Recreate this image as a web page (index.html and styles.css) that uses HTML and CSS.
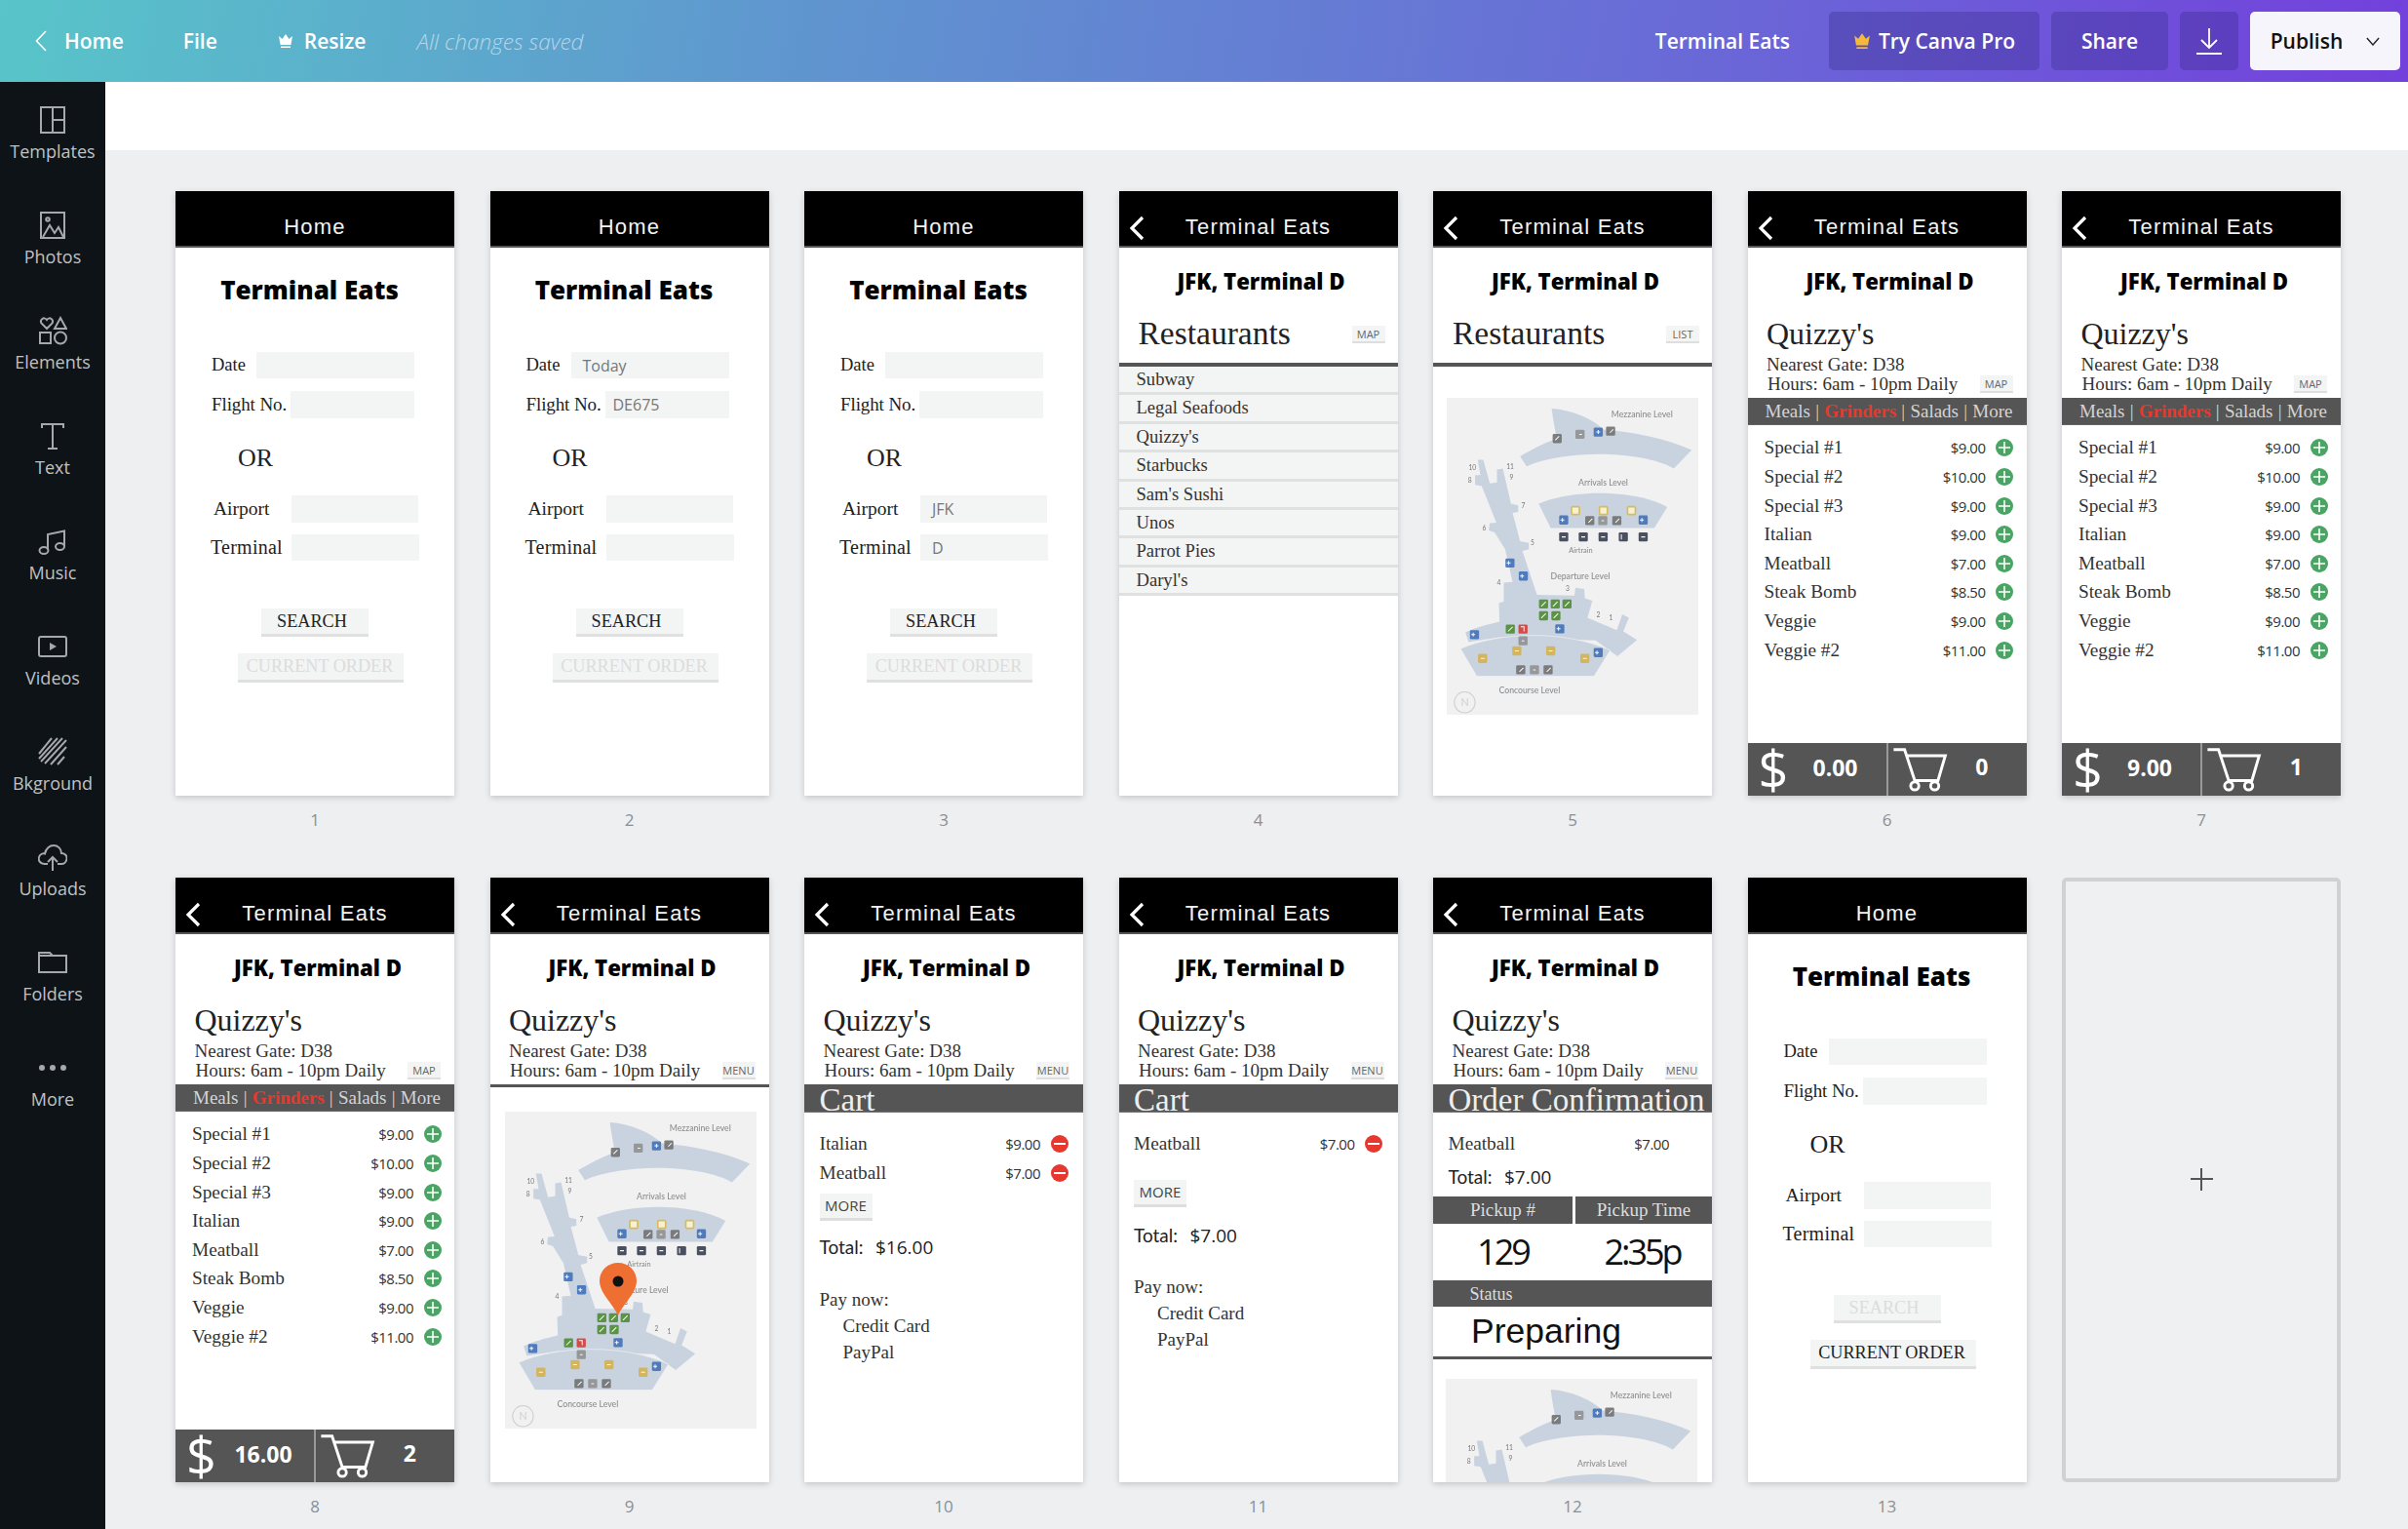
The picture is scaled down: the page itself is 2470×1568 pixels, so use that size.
FILE: index.html
```html
<!DOCTYPE html>
<html lang="en">
<head>
<meta charset="utf-8">
<title>Terminal Eats</title>
<link rel="stylesheet" href="styles.css">
</head>
<body>
<svg class="defs" width="0" height="0" aria-hidden="true">
  <symbol id="back" viewBox="0 0 16 26"><polyline points="14,2 3,13 14,24" fill="none" stroke="#fff" stroke-width="3.2"/></symbol>
  <symbol id="plus" viewBox="0 0 18 18"><circle cx="9" cy="9" r="9" fill="#4aa564"/><path d="M9 3v12M3 9h12" stroke="#fff" stroke-width="1.6"/></symbol>
  <symbol id="minus" viewBox="0 0 18 18"><circle cx="9" cy="9" r="9" fill="#e8372f"/><path d="M3 9h12" stroke="#fff" stroke-width="2"/></symbol>
  <symbol id="cart" viewBox="380 1365 140 115"><path d="M385 1374H412L437 1450H494L512 1389H418" fill="none" stroke="#fff" stroke-width="7"/><circle cx="437" cy="1463" r="10" fill="none" stroke="#fff" stroke-width="7"/><circle cx="486" cy="1463" r="10" fill="none" stroke="#fff" stroke-width="7"/></symbol>
  <symbol id="map" viewBox="43 25 772 973">
    <rect x="43" y="25" width="772" height="973" fill="#f1f1f2"/>
    <g fill="#c9d3df">
      <path d="M365 58C430 62 490 90 525 122C620 130 720 150 795 185L740 242C650 190 420 180 288 235L268 205C300 185 340 165 380 150C375 120 368 85 365 58Z"/>
      <path d="M325 350C430 305 620 305 720 360L680 425H362Z"/>
      <path d="M138 215L155 215L175 288L197 285L197 245L215 242L225 285L240 350L262 355L262 375L245 378L268 465L295 470L295 490L275 495L320 630L435 632L438 608L465 612L467 640L490 648L475 700L565 738L582 690L602 700L585 742L627 768L567 818L500 770L205 760L110 775L100 745C130 730 170 720 205 712L203 655L218 650L218 592L245 590L222 490L190 438L172 432L175 410L195 408L150 295L130 292L130 262L146 262Z"/>
      <path d="M85 795C200 745 400 735 545 800L495 880H135Z" stroke="#f1f1f2" stroke-width="2"/>
    </g>
    <g class="mk">
    <g fill="#6f6f6f">
      <rect x="368" y="136" width="28" height="28" rx="4"/><rect x="532" y="113" width="28" height="28" rx="4"/>
      <rect x="468" y="388" width="28" height="28" rx="4"/><rect x="551" y="388" width="28" height="28" rx="4"/>
      <rect x="256" y="846" width="28" height="28" rx="4"/><rect x="340" y="846" width="28" height="28" rx="4"/>
    </g>
    <g fill="#8f8f8f">
      <rect x="438" y="123" width="28" height="28" rx="4"/><rect x="508" y="388" width="28" height="28" rx="4"/><rect x="263" y="757" width="28" height="28" rx="4"/><rect x="298" y="846" width="28" height="28" rx="4"/>
    </g>
    <g fill="#3f70b8">
      <rect x="494" y="116" width="28" height="28" rx="4"/><rect x="388" y="386" width="28" height="28" rx="4"/><rect x="632" y="386" width="28" height="28" rx="4"/><rect x="223" y="518" width="28" height="28" rx="4"/><rect x="264" y="558" width="28" height="28" rx="4"/><rect x="376" y="720" width="28" height="28" rx="4"/><rect x="114" y="738" width="28" height="28" rx="4"/><rect x="494" y="793" width="28" height="28" rx="4"/>
    </g>
    <g fill="#fdf5d4" stroke="#d9b84a" stroke-width="5">
      <rect x="426" y="359" width="24" height="24" rx="3"/><rect x="512" y="359" width="24" height="24" rx="3"/><rect x="598" y="359" width="24" height="24" rx="3"/>
    </g>
    <g fill="#d4b24a">
      <rect x="139" y="811" width="28" height="28" rx="4"/><rect x="244" y="788" width="28" height="28" rx="4"/><rect x="348" y="788" width="28" height="28" rx="4"/><rect x="453" y="811" width="28" height="28" rx="4"/>
    </g>
    <g fill="#333a4d">
      <rect x="388" y="438" width="28" height="28" rx="4"/><rect x="448" y="438" width="28" height="28" rx="4"/><rect x="509" y="438" width="28" height="28" rx="4"/><rect x="571" y="438" width="28" height="28" rx="4"/><rect x="632" y="438" width="28" height="28" rx="4"/>
    </g>
    <g fill="#4c8c2c">
      <rect x="326" y="644" width="28" height="28" rx="4"/><rect x="362" y="644" width="28" height="28" rx="4"/><rect x="398" y="644" width="28" height="28" rx="4"/><rect x="326" y="680" width="28" height="28" rx="4"/><rect x="364" y="680" width="28" height="28" rx="4"/><rect x="224" y="721" width="28" height="28" rx="4"/>
    </g>
    <rect x="263" y="721" width="28" height="28" rx="4" fill="#d23c33"/>
    <path d="M376 155l12-12M450 137h8M508 124v12M502 130h12M544 132l10-10M478 408l12-12M561 408l12-12M518 402h8M273 771h8M266 866l12-12M308 860h8M350 866l12-12M398 394v12M392 400h12M642 394v12M636 400h12M233 526v12M227 532h12M274 566v12M268 572h12M386 728v12M380 734h12M124 746v12M118 752h12M504 801v12M498 807h12M333 665l14-14M369 665l14-14M405 665l14-14M333 701l14-14M371 701l14-14M231 742l14-14M270 728h10v14M147 825h12M252 802h12M356 802h12M461 825h12M396 452h12M456 452h12M517 452h12M579 444v16M640 452h12" fill="none" stroke="#fff" stroke-width="3"/>
    </g>
    <g class="map-lvl">
      <text x="548" y="84">Mezzanine Level</text>
      <text x="447" y="294">Arrivals Level</text>
      <text x="418" y="500" class="map-sm">Airtrain</text>
      <text x="362" y="582">Departure Level</text>
      <text x="203" y="932">Concourse Level</text>
    </g>
    <g class="map-num">
      <text x="110" y="248">10</text><text x="108" y="286">8</text><text x="226" y="245">11</text><text x="236" y="278">9</text><text x="272" y="363">7</text><text x="152" y="431">6</text><text x="300" y="476">5</text><text x="197" y="599">4</text><text x="408" y="619">3</text><text x="502" y="698">2</text><text x="541" y="708">1</text>
    </g>
    <circle cx="98" cy="960" r="32" fill="none" stroke="#cfcfcf" stroke-width="3"/>
    <text x="86" y="971" class="map-n">N</text>
  </symbol>
</svg>

<header class="topbar">
  <div class="top-left">
    <svg class="top-back" viewBox="0 0 12 22"><polyline points="11,1 1.5,11 11,21" fill="none" stroke="#fff" stroke-width="1.6"/></svg>
    <span class="top-home">Home</span>
    <span class="top-file">File</span>
    <svg class="crown" viewBox="0 0 16 16"><path d="M1 3l3.5 3L8 1l3.5 5L15 3l-1.6 9H2.600zM3 13.500h10V15H3z" fill="#fff"/></svg>
    <span class="top-resize">Resize</span>
    <span class="top-saved">All changes saved</span>
  </div>
  <div class="top-right">
    <span class="top-name">Terminal Eats</span>
    <button class="tbtn tbtn-pro"><svg class="crown crown-pro" viewBox="0 0 16 16"><path d="M1 3l3.500 3L8 1l3.500 5L15 3l-1.600 9H2.600zM3 13.500h10V15H3z" fill="#f5b93a"/></svg>Try Canva Pro</button>
    <button class="tbtn tbtn-share">Share</button>
    <button class="tbtn tbtn-dl"><svg class="dl" viewBox="0 0 28 28"><path d="M14 1v19M6 13l8 8 8-8M1 27h26" fill="none" stroke="#fff" stroke-width="1.800"/></svg></button>
    <button class="tbtn tbtn-pub"><span>Publish</span><svg class="pub-chev" viewBox="0 0 16 10"><polyline points="1,1 8,9 15,1" fill="none" stroke="#222" stroke-width="1.600"/></svg></button>
  </div>
</header>

<div class="main">
  <nav class="sidebar">
    <div class="tool"><svg class="ico" viewBox="0 0 30 30"><path d="M3 2h24v26H3zM15 2v26M15 15h12" fill="none"/></svg><span>Templates</span></div>
    <div class="tool"><svg class="ico" viewBox="0 0 30 30"><path d="M3 2h24v26H3zM5 27l7-12 5 8 4-6 5 10" fill="none"/><circle cx="10" cy="9" r="1.800"/></svg><span>Photos</span></div>
    <div class="tool"><svg class="ico" viewBox="0 0 30 30"><path d="M9 13L3.500 7.500C1.500 4 6 0 9 4c3-4 7.500 0 5.500 3.500zM23 2l6 11H17zM2 17h11v11H2z" fill="none"/><circle cx="23" cy="22.500" r="6" fill="none"/></svg><span>Elements</span></div>
    <div class="tool"><svg class="ico" viewBox="0 0 30 30"><path d="M4 7V3h22v4M15 3v25M10 28h10" fill="none"/></svg><span>Text</span></div>
    <div class="tool"><svg class="ico" viewBox="0 0 30 30"><path d="M10 24V8l17-3.500V20" fill="none"/><ellipse cx="6" cy="24.500" rx="4.500" ry="3.500" fill="none"/><ellipse cx="22.500" cy="20.500" rx="4.500" ry="3.500" fill="none"/></svg><span>Music</span></div>
    <div class="tool"><svg class="ico" viewBox="0 0 30 30"><rect x="1" y="5" width="28" height="20" rx="2" fill="none"/><path class="solid" d="M12 11l7 4-7 4z"/></svg><span>Videos</span></div>
    <div class="tool"><svg class="ico" viewBox="0 0 30 30"><path d="M1 17L14 1M1 22L20 1M3 25L25 1M7 27L29 3M13 28L29 10M20 28L27 20" fill="none"/></svg><span>Bkground</span></div>
    <div class="tool"><svg class="ico" viewBox="0 0 30 30"><path d="M10 22H7C2 22 0 18 1 15c1-3 4-4 6-3.500C8 6 12 3 16 3c4 0 8 3 8 8 3 0 6 2 5.500 6-.5 3-3 5-5.500 5h-4M15 29V15M10 20l5-5 5 5" fill="none"/></svg><span>Uploads</span></div>
    <div class="tool"><svg class="ico" viewBox="0 0 30 30"><path d="M1 5h11l3 3h14v17H1zM1 8h14" fill="none"/></svg><span>Folders</span></div>
    <div class="tool"><svg class="ico" viewBox="0 0 30 30"><circle class="solid" cx="4" cy="15" r="3"/><circle class="solid" cx="15" cy="15" r="3"/><circle class="solid" cx="26" cy="15" r="3"/></svg><span>More</span></div>
  </nav>

  <main class="content">
    <div class="strip"></div>
    <div class="pages">

      <div class="page">
        <article class="card">
          <div class="head head-home"><span class="head-title">Home</span></div>
          <h1 class="brand">Terminal Eats</h1>
          <div class="row r-date"><label class="lb">Date</label><span class="inp"></span></div>
          <div class="row r-flight"><label class="lb">Flight No.</label><span class="inp"></span></div>
          <div class="or">OR</div>
          <div class="row r-air"><label class="lb">Airport</label><span class="inp"></span></div>
          <div class="row r-term"><label class="lb">Terminal</label><span class="inp"></span></div>
          <div class="fbtn fb-search">SEARCH</div>
          <div class="fbtn fb-order off">CURRENT ORDER</div>
        </article>
        <div class="num">1</div>
      </div>

      <div class="page">
        <article class="card">
          <div class="head head-home"><span class="head-title">Home</span></div>
          <h1 class="brand">Terminal Eats</h1>
          <div class="row r-date"><label class="lb">Date</label><span class="inp">Today</span></div>
          <div class="row r-flight"><label class="lb">Flight No.</label><span class="inp">DE675</span></div>
          <div class="or">OR</div>
          <div class="row r-air"><label class="lb">Airport</label><span class="inp"></span></div>
          <div class="row r-term"><label class="lb">Terminal</label><span class="inp"></span></div>
          <div class="fbtn fb-search">SEARCH</div>
          <div class="fbtn fb-order off">CURRENT ORDER</div>
        </article>
        <div class="num">2</div>
      </div>

      <div class="page">
        <article class="card">
          <div class="head head-home"><span class="head-title">Home</span></div>
          <h1 class="brand">Terminal Eats</h1>
          <div class="row r-date"><label class="lb">Date</label><span class="inp"></span></div>
          <div class="row r-flight"><label class="lb">Flight No.</label><span class="inp"></span></div>
          <div class="or">OR</div>
          <div class="row r-air"><label class="lb">Airport</label><span class="inp">JFK</span></div>
          <div class="row r-term"><label class="lb">Terminal</label><span class="inp">D</span></div>
          <div class="fbtn fb-search">SEARCH</div>
          <div class="fbtn fb-order off">CURRENT ORDER</div>
        </article>
        <div class="num">3</div>
      </div>

      <div class="page">
        <article class="card">
          <div class="head"><svg class="back"><use href="#back"/></svg><span class="head-title">Terminal Eats</span></div>
          <h2 class="venue">JFK, Terminal D</h2>
          <div class="rest-row"><span class="rest-name">Restaurants</span><span class="tag">MAP</span></div>
          <ul class="rlist">
            <li>Subway</li><li>Legal Seafoods</li><li>Quizzy's</li><li>Starbucks</li><li>Sam's Sushi</li><li>Unos</li><li>Parrot Pies</li><li>Daryl's</li>
          </ul>
        </article>
        <div class="num">4</div>
      </div>

      <div class="page">
        <article class="card">
          <div class="head"><svg class="back"><use href="#back"/></svg><span class="head-title">Terminal Eats</span></div>
          <h2 class="venue">JFK, Terminal D</h2>
          <div class="rest-row"><span class="rest-name">Restaurants</span><span class="tag">LIST</span></div>
          <svg class="map map-5"><use href="#map"/></svg>
        </article>
        <div class="num">5</div>
      </div>

      <div class="page">
        <article class="card">
          <div class="head"><svg class="back"><use href="#back"/></svg><span class="head-title">Terminal Eats</span></div>
          <h2 class="venue">JFK, Terminal D</h2>
          <div class="q-name">Quizzy's</div>
          <div class="q-gate">Nearest Gate: D38</div>
          <div class="q-hours"><span>Hours: 6am - 10pm Daily</span><span class="tag">MAP</span></div>
          <div class="tabs"><span>Meals</span><span>|</span><span class="red">Grinders</span><span>|</span><span>Salads</span><span>|</span><span>More</span></div>
          <ul class="menu">
            <li><span class="nm">Special #1</span><span class="pr">$9.00</span><svg class="dot"><use href="#plus"/></svg></li>
            <li><span class="nm">Special #2</span><span class="pr">$10.00</span><svg class="dot"><use href="#plus"/></svg></li>
            <li><span class="nm">Special #3</span><span class="pr">$9.00</span><svg class="dot"><use href="#plus"/></svg></li>
            <li><span class="nm">Italian</span><span class="pr">$9.00</span><svg class="dot"><use href="#plus"/></svg></li>
            <li><span class="nm">Meatball</span><span class="pr">$7.00</span><svg class="dot"><use href="#plus"/></svg></li>
            <li><span class="nm">Steak Bomb</span><span class="pr">$8.50</span><svg class="dot"><use href="#plus"/></svg></li>
            <li><span class="nm">Veggie</span><span class="pr">$9.00</span><svg class="dot"><use href="#plus"/></svg></li>
            <li><span class="nm">Veggie #2</span><span class="pr">$11.00</span><svg class="dot"><use href="#plus"/></svg></li>
          </ul>
          <div class="foot"><div class="f-a"><span class="usd">$</span><span class="amt">0.00</span></div><div class="f-b"><svg class="cart"><use href="#cart"/></svg><span class="cnt">0</span></div></div>
        </article>
        <div class="num">6</div>
      </div>

      <div class="page">
        <article class="card">
          <div class="head"><svg class="back"><use href="#back"/></svg><span class="head-title">Terminal Eats</span></div>
          <h2 class="venue">JFK, Terminal D</h2>
          <div class="q-name">Quizzy's</div>
          <div class="q-gate">Nearest Gate: D38</div>
          <div class="q-hours"><span>Hours: 6am - 10pm Daily</span><span class="tag">MAP</span></div>
          <div class="tabs"><span>Meals</span><span>|</span><span class="red">Grinders</span><span>|</span><span>Salads</span><span>|</span><span>More</span></div>
          <ul class="menu">
            <li><span class="nm">Special #1</span><span class="pr">$9.00</span><svg class="dot"><use href="#plus"/></svg></li>
            <li><span class="nm">Special #2</span><span class="pr">$10.00</span><svg class="dot"><use href="#plus"/></svg></li>
            <li><span class="nm">Special #3</span><span class="pr">$9.00</span><svg class="dot"><use href="#plus"/></svg></li>
            <li><span class="nm">Italian</span><span class="pr">$9.00</span><svg class="dot"><use href="#plus"/></svg></li>
            <li><span class="nm">Meatball</span><span class="pr">$7.00</span><svg class="dot"><use href="#plus"/></svg></li>
            <li><span class="nm">Steak Bomb</span><span class="pr">$8.50</span><svg class="dot"><use href="#plus"/></svg></li>
            <li><span class="nm">Veggie</span><span class="pr">$9.00</span><svg class="dot"><use href="#plus"/></svg></li>
            <li><span class="nm">Veggie #2</span><span class="pr">$11.00</span><svg class="dot"><use href="#plus"/></svg></li>
          </ul>
          <div class="foot"><div class="f-a"><span class="usd">$</span><span class="amt">9.00</span></div><div class="f-b"><svg class="cart"><use href="#cart"/></svg><span class="cnt">1</span></div></div>
        </article>
        <div class="num">7</div>
      </div>

      <div class="page">
        <article class="card">
          <div class="head"><svg class="back"><use href="#back"/></svg><span class="head-title">Terminal Eats</span></div>
          <h2 class="venue">JFK, Terminal D</h2>
          <div class="q-name">Quizzy's</div>
          <div class="q-gate">Nearest Gate: D38</div>
          <div class="q-hours"><span>Hours: 6am - 10pm Daily</span><span class="tag">MAP</span></div>
          <div class="tabs"><span>Meals</span><span>|</span><span class="red">Grinders</span><span>|</span><span>Salads</span><span>|</span><span>More</span></div>
          <ul class="menu">
            <li><span class="nm">Special #1</span><span class="pr">$9.00</span><svg class="dot"><use href="#plus"/></svg></li>
            <li><span class="nm">Special #2</span><span class="pr">$10.00</span><svg class="dot"><use href="#plus"/></svg></li>
            <li><span class="nm">Special #3</span><span class="pr">$9.00</span><svg class="dot"><use href="#plus"/></svg></li>
            <li><span class="nm">Italian</span><span class="pr">$9.00</span><svg class="dot"><use href="#plus"/></svg></li>
            <li><span class="nm">Meatball</span><span class="pr">$7.00</span><svg class="dot"><use href="#plus"/></svg></li>
            <li><span class="nm">Steak Bomb</span><span class="pr">$8.50</span><svg class="dot"><use href="#plus"/></svg></li>
            <li><span class="nm">Veggie</span><span class="pr">$9.00</span><svg class="dot"><use href="#plus"/></svg></li>
            <li><span class="nm">Veggie #2</span><span class="pr">$11.00</span><svg class="dot"><use href="#plus"/></svg></li>
          </ul>
          <div class="foot"><div class="f-a"><span class="usd">$</span><span class="amt">16.00</span></div><div class="f-b"><svg class="cart"><use href="#cart"/></svg><span class="cnt">2</span></div></div>
        </article>
        <div class="num">8</div>
      </div>

      <div class="page">
        <article class="card">
          <div class="head"><svg class="back"><use href="#back"/></svg><span class="head-title">Terminal Eats</span></div>
          <h2 class="venue">JFK, Terminal D</h2>
          <div class="q-name">Quizzy's</div>
          <div class="q-gate">Nearest Gate: D38</div>
          <div class="q-hours"><span>Hours: 6am - 10pm Daily</span><span class="tag">MENU</span></div>
          <div class="rule"></div>
          <div class="map-wrap map-9">
            <svg class="map"><use href="#map"/></svg>
            <svg class="pin" viewBox="0 0 40 56"><path d="M20 55C14 42 1 32 1 19.500C1 9 9.500 1 20 1s19 8 19 18.500C39 32 26 42 20 55z" fill="#ef6f33"/><circle cx="20" cy="20" r="5.500" fill="#111"/></svg>
          </div>
        </article>
        <div class="num">9</div>
      </div>

      <div class="page">
        <article class="card">
          <div class="head"><svg class="back"><use href="#back"/></svg><span class="head-title">Terminal Eats</span></div>
          <h2 class="venue">JFK, Terminal D</h2>
          <div class="q-name">Quizzy's</div>
          <div class="q-gate">Nearest Gate: D38</div>
          <div class="q-hours"><span>Hours: 6am - 10pm Daily</span><span class="tag">MENU</span></div>
          <div class="bar">Cart</div>
          <ul class="menu cartlist">
            <li><span class="nm">Italian</span><span class="pr">$9.00</span><svg class="dot"><use href="#minus"/></svg></li>
            <li><span class="nm">Meatball</span><span class="pr">$7.00</span><svg class="dot"><use href="#minus"/></svg></li>
          </ul>
          <div class="more more-10">MORE</div>
          <div class="total t-10"><span class="t-l">Total:</span><span>$16.00</span></div>
          <div class="pay p-10">Pay now:</div>
          <div class="pay-opt">Credit Card</div>
          <div class="pay-opt">PayPal</div>
        </article>
        <div class="num">10</div>
      </div>

      <div class="page">
        <article class="card">
          <div class="head"><svg class="back"><use href="#back"/></svg><span class="head-title">Terminal Eats</span></div>
          <h2 class="venue">JFK, Terminal D</h2>
          <div class="q-name">Quizzy's</div>
          <div class="q-gate">Nearest Gate: D38</div>
          <div class="q-hours"><span>Hours: 6am - 10pm Daily</span><span class="tag">MENU</span></div>
          <div class="bar">Cart</div>
          <ul class="menu cartlist">
            <li><span class="nm">Meatball</span><span class="pr">$7.00</span><svg class="dot"><use href="#minus"/></svg></li>
          </ul>
          <div class="more more-11">MORE</div>
          <div class="total t-11"><span class="t-l">Total:</span><span>$7.00</span></div>
          <div class="pay p-11">Pay now:</div>
          <div class="pay-opt">Credit Card</div>
          <div class="pay-opt">PayPal</div>
        </article>
        <div class="num">11</div>
      </div>

      <div class="page">
        <article class="card">
          <div class="head"><svg class="back"><use href="#back"/></svg><span class="head-title">Terminal Eats</span></div>
          <h2 class="venue">JFK, Terminal D</h2>
          <div class="q-name">Quizzy's</div>
          <div class="q-gate">Nearest Gate: D38</div>
          <div class="q-hours"><span>Hours: 6am - 10pm Daily</span><span class="tag">MENU</span></div>
          <div class="bar">Order Confirmation</div>
          <ul class="menu cartlist">
            <li><span class="nm">Meatball</span><span class="pr">$7.00</span><span class="dot"></span></li>
          </ul>
          <div class="total t-12"><span class="t-l">Total:</span><span>$7.00</span></div>
          <div class="pick-head"><span>Pickup #</span><span>Pickup Time</span></div>
          <div class="pick-vals"><span>129</span><span>2:35p</span></div>
          <div class="status">Status</div>
          <div class="state">Preparing</div>
          <svg class="map map-12"><use href="#map"/></svg>
        </article>
        <div class="num">12</div>
      </div>

      <div class="page">
        <article class="card">
          <div class="head head-home"><span class="head-title">Home</span></div>
          <h1 class="brand">Terminal Eats</h1>
          <div class="row r-date"><label class="lb">Date</label><span class="inp"></span></div>
          <div class="row r-flight"><label class="lb">Flight No.</label><span class="inp"></span></div>
          <div class="or">OR</div>
          <div class="row r-air"><label class="lb">Airport</label><span class="inp"></span></div>
          <div class="row r-term"><label class="lb">Terminal</label><span class="inp"></span></div>
          <div class="fbtn fb-search off">SEARCH</div>
          <div class="fbtn fb-order">CURRENT ORDER</div>
        </article>
        <div class="num">13</div>
      </div>

      <div class="page">
        <div class="add"><span class="add-plus"></span></div>
      </div>

    </div>
  </main>
</div>
</body>
</html>
```

FILE: styles.css
```css
* { box-sizing: border-box; }
html, body { margin: 0; padding: 0; height: 100%; }
body { width: 2470px; height: 1568px; overflow: hidden; display: flex; flex-direction: column; font-family: "Open Sans", sans-serif; background: #eeeff1; }
h1, h2, ul { margin: 0; padding: 0; list-style: none; }
.defs { position: absolute; }

.topbar { height: 84px; flex: none; display: flex; justify-content: space-between; align-items: center; padding-right: 8px; background: linear-gradient(100deg, #58c5c9 0%, #5f97cf 32%, #6870d6 65%, #7340dc 100%); color: #fff; font-size: 21px; font-weight: 600; }
.top-left { display: flex; align-items: center; padding-left: 36px; }
.top-back { width: 12px; height: 22px; }
.top-home { margin-left: 18px; }
.top-file { margin-left: 61px; }
.crown { width: 16px; height: 16px; margin-left: 62px; }
.top-resize { margin-left: 11px; }
.top-saved { margin-left: 52px; font-size: 22.6px; font-style: italic; font-weight: 300; color: rgba(255,255,255,.55); }
.top-right { display: flex; align-items: center; gap: 12px; }
.top-name { margin-right: 28px; }
.tbtn { height: 60px; border: 0; border-radius: 5px; display: flex; align-items: center; justify-content: center; background: rgba(50,40,130,.32); color: #fff; font: inherit; padding: 0; }
.tbtn-pro { width: 216px; }
.crown-pro { width: 18px; height: 18px; margin: 0 8px 0 0; }
.tbtn-share { width: 120px; }
.tbtn-dl { width: 60px; }
.dl { width: 28px; height: 28px; }
.tbtn-pub { width: 154px; background: #f7f5fc; color: #111; }
.pub-chev { width: 14px; height: 9px; margin-left: 24px; }

.main { flex: 1; display: flex; min-height: 0; }
.sidebar { width: 108px; flex: none; background: #0e1318; display: flex; flex-direction: column; padding-top: 14.5px; }
.tool { height: 108px; flex: none; display: flex; flex-direction: column; align-items: center; padding-top: 9px; color: #bfc1c3; font-size: 18px; line-height: 24px; }
.tool span { margin-top: 5px; }
.ico { width: 30px; height: 30px; stroke: #a6a8ab; stroke-width: 2; fill: none; }
.ico .solid { fill: #a6a8ab; stroke: none; }
.ico circle { fill: none; }
.ico circle.solid { fill: #a6a8ab; }

.content { flex: 1; min-width: 0; overflow: hidden; }
.strip { height: 70px; background: #fff; }
.pages { display: grid; grid-template-columns: repeat(7, 286px); column-gap: 36.5px; padding: 42px 0 0 72px; }
.page { height: 704px; }
.num { height: 50px; line-height: 50px; text-align: center; font-size: 17px; color: #8a8f94; }
.card { width: 286px; height: 620px; background: #fff; display: flex; flex-direction: column; overflow: hidden; box-shadow: 0 2px 6px rgba(40,50,60,.22); font-family: "Liberation Serif", serif; color: #222; position: relative; }

.head { height: 58px; flex: none; background: #000; border-bottom: 2px solid #555; display: flex; align-items: flex-end; justify-content: center; position: relative; }
.head-title { font-family: "Liberation Sans", sans-serif; font-size: 22px; letter-spacing: 1.25px; line-height: 26px; color: #f3f3f3; margin-bottom: 6px; }
.back { position: absolute; left: 10px; top: 25px; width: 16px; height: 26px; }

.brand { height: 85px; display: flex; align-items: center; justify-content: center; padding-right: 11px; font: 800 26px "Open Sans", sans-serif; color: #000; }
.row { display: flex; font-size: 18.5px; align-items: center; color: #222; }
.lb { flex: none; }
.inp { background: #f3f4f4; height: 100%; display: flex; align-items: center; padding-left: 12px; font: 16px "Open Sans", sans-serif; color: #777; }
.r-date { height: 27px; margin-top: 22px; padding-left: 37px; }
.r-date .lb { width: 46px; }
.r-date .inp { width: 162px; }
.r-flight { height: 28px; margin-top: 13px; padding-left: 37px; }
.r-flight .lb { width: 81px; font-size: 19px; letter-spacing: -.1px; }
.r-flight .inp { width: 127px; padding-left: 8px; }
.or { height: 48px; margin-top: 17px; padding-left: 64px; font-size: 26px; line-height: 48px; }
.r-air { height: 28px; margin-top: 14px; padding-left: 39px; }
.r-air .lb { width: 80px; font-size: 19.5px; }
.r-air .inp { width: 130px; }
.r-term { height: 27px; margin-top: 12px; padding-left: 36px; }
.r-term .lb { width: 83px; font-size: 20px; letter-spacing: .25px; }
.r-term .inp { width: 131px; }
.fbtn { background: #f3f4f4; border-bottom: 3px solid #e0e0e0; font-size: 18.2px; text-align: center; color: #222; display: flex; align-items: center; justify-content: center; }
.fb-search { margin: 49px 0 0 88px; width: 110px; height: 29px; padding-right: 6px; }
.fb-order { margin: 17px 0 0 64px; width: 170px; height: 30px; padding-right: 2px; }
.off { color: #dcdcdc; }

.venue { height: 69px; margin-bottom: 1px; flex: none; display: flex; align-items: center; justify-content: center; padding-left: 6px; font: 800 22.2px "Open Sans", sans-serif; color: #000; }
.rest-row { height: 52px; flex: none; border-bottom: 4px solid #555; display: flex; justify-content: space-between; align-items: flex-start; padding: 0 13px 0 20px; }
.rest-name { font-size: 33.5px; line-height: 36px; color: #222; }
.tag { background: #f3f4f4; border-bottom: 2px solid #dedede; width: 34px; height: 18px; font: 11px/17px "Open Sans", sans-serif; color: #666; text-align: center; }
.rest-row .tag { margin-top: 10px; }
.rlist { margin-top: 0; }
.rlist li { height: 29.4px; background: #f3f4f4; border-bottom: 3px solid #dfe0e0; padding-left: 18px; font-size: 18.6px; line-height: 26px; color: #333; }

.map { display: block; width: 258px; height: 325px; flex: none; filter: blur(.45px); }
.map-5 { margin: 32px 0 0 14px; }
.map-wrap { position: relative; }
.map-9 { margin: 25px 0 0 15px; }
.map-12 { margin: 20px 0 0 13px; }
.pin { position: absolute; left: 96px; top: 153px; width: 40px; height: 58px; }
.mk { opacity: .88; }
.map-lvl text { font: 500 26px "Lato", sans-serif; fill: #8a8d90; }
.map-lvl .map-sm { font-size: 22px; }
.map-num text { font: 20px "Lato", sans-serif; fill: #777; }
.map-n { font: 32px "Lato", sans-serif; fill: #cfcfcf; }

.q-name { height: 36px; flex: none; padding-left: 19.4px; font-size: 32px; line-height: 36px; color: #222; }
.q-gate { height: 23.5px; flex: none; padding: 3.5px 0 0 19.5px; font-size: 19px; line-height: 20px; color: #333; }
.q-hours { height: 24.5px; flex: none; display: flex; justify-content: space-between; align-items: flex-start; padding: 0 14px 0 20.5px; font-size: 19px; line-height: 20px; color: #333; }
.q-hours .tag { margin-top: 1.5px; }
.tabs { height: 28px; flex: none; background: #555; border-bottom: 1px solid #666; display: flex; justify-content: space-between; align-items: center; padding: 1px 14px 0 18px; font-size: 19px; color: #d4d4d4; }
.red { color: #e5392e; font-weight: 700; }
.rule { height: 3px; flex: none; background: #555; }
.menu { padding-top: 8.7px; }
.menu li { height: 29.6px; display: flex; align-items: center; padding: 0 13.5px 0 17px; font-size: 19.3px; color: #333; }
.nm { flex: 1; }
.pr { font: 15px "Open Sans", sans-serif; letter-spacing: -.5px; color: #333; margin-right: 10.5px; }
.dot { width: 18px; height: 18px; flex: none; }
.foot { margin-top: auto; height: 54px; flex: none; background: #555; display: flex; color: #fff; font-family: "Open Sans", sans-serif; font-weight: 700; }
.f-a { width: 144px; flex: none; border-right: 2px solid #999; display: flex; align-items: center; padding-left: 11px; }
.usd { width: 35px; flex: none; font-size: 54px; font-weight: 400; line-height: 54px; margin-top: -2px; }
.amt { width: 88px; flex: none; text-align: center; font-size: 23px; margin-bottom: 5px; }
.f-b { flex: 1; display: flex; align-items: flex-start; }
.cart { width: 59px; height: 48px; flex: none; margin: 2.5px 0 0 3.3px; }
.cnt { width: 68px; text-align: center; font-size: 23px; line-height: 49px; }

.bar { height: 29px; flex: none; background: #555; padding-left: 15.5px; font-size: 33px; line-height: 32px; color: #eee; border-bottom: 1px solid #777; overflow: hidden; white-space: nowrap; }
.cartlist { padding-top: 17.5px; }
.cartlist li { padding: 0 15.5px; }
.cartlist .pr { margin-right: 10.5px; }
.more { width: 54px; height: 28px; background: #f3f4f4; border-bottom: 3px solid #dedede; margin-left: 15.5px; font: 15px/25px "Open Sans", sans-serif; text-align: center; color: #444; }
.more-10 { margin-top: 6px; }
.more-11 { margin-top: 22.4px; }
.total { font: 19px/24px "Open Sans", sans-serif; color: #222; padding-left: 15.5px; display: flex; }
.t-l { width: 57.5px; font-family: "Lato", sans-serif; }
.t-10 { margin-top: 15.5px; }
.t-11 { margin-top: 17px; }
.t-12 { margin-top: 6.7px; height: 24px; }
.pay { font-size: 19px; line-height: 27px; padding-left: 15.5px; color: #333; }
.p-10 { margin-top: 27.5px; }
.p-11 { margin-top: 26.5px; }
.pay-opt { font-size: 19px; line-height: 27px; padding-left: 39.5px; color: #333; }

.pick-head { height: 27.5px; flex: none; margin-top: 8.5px; display: flex; background: #555; color: #ddd; font-size: 19px; line-height: 27px; text-align: center; }
.pick-head span { width: 143px; }
.pick-head span + span { border-left: 3px solid #fff; }
.pick-vals { height: 58px; flex: none; display: flex; text-align: center; font: 400 36px/58px "Open Sans", sans-serif; letter-spacing: -3px; color: #111; }
.pick-vals span { width: 143px; }
.status { height: 27.5px; flex: none; background: #555; color: #ddd; padding-left: 37.5px; font-size: 18px; line-height: 28px; }
.state { height: 54px; flex: none; border-bottom: 3px solid #555; padding-left: 39px; font: 35.5px/50px "Liberation Sans", sans-serif; color: #111; }

.add { width: 286px; height: 620px; border: 4px solid #cfd1d4; background: #eff0f2; border-radius: 5px; display: flex; align-items: center; justify-content: center; }
.add-plus { width: 23px; height: 23px; margin-top: -2px; background: linear-gradient(#555,#555) center/100% 2px no-repeat, linear-gradient(#555,#555) center/2px 100% no-repeat; }
```
